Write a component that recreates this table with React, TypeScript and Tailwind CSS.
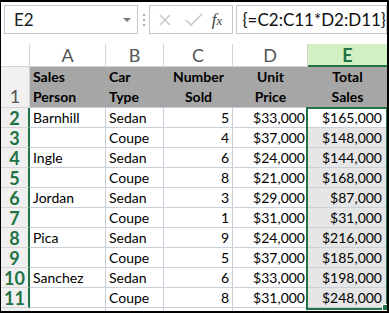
import React from 'react';

const rows = [
  ['Barnhill', 'Sedan', '5', '$33,000', '$165,000'],
  ['', 'Coupe', '4', '$37,000', '$148,000'],
  ['Ingle', 'Sedan', '6', '$24,000', '$144,000'],
  ['', 'Coupe', '8', '$21,000', '$168,000'],
  ['Jordan', 'Sedan', '3', '$29,000', '$87,000'],
  ['', 'Coupe', '1', '$31,000', '$31,000'],
  ['Pica', 'Sedan', '9', '$24,000', '$216,000'],
  ['', 'Coupe', '5', '$37,000', '$185,000'],
  ['Sanchez', 'Sedan', '6', '$33,000', '$198,000'],
  ['', 'Coupe', '8', '$31,000', '$248,000'],
];

const cols = 'grid grid-cols-[29px_76px_58px_69px_75px_79px]';

function Toolbar() {
  return (
    <div className="flex h-[42px] items-start pt-[3px] pl-[3px]">
      <div className="relative flex h-[29px] w-[137px] items-center border border-[#c6c6c6] pl-[9px] text-[17px] text-[#222]">
        E2
        <span className="absolute right-[6px] top-[12px] h-0 w-0 border-x-[4px] border-t-[4px] border-x-transparent border-t-[#7a7a7a]" />
      </div>
      <div className="ml-[5px] mt-[9px] flex flex-col gap-[3px]">
        <span className="h-[2px] w-[2px] bg-[#b0b0b0]" />
        <span className="h-[2px] w-[2px] bg-[#b0b0b0]" />
        <span className="h-[2px] w-[2px] bg-[#b0b0b0]" />
      </div>
      <div className="ml-[4px] flex h-[29px] w-[87px] items-center border border-[#c6c6c6]">
        <svg width="14" height="14" viewBox="0 0 14 14" className="ml-[8px]">
          <path d="M2 2 L12 12 M12 2 L2 12" stroke="#cacaca" strokeWidth="1.6" fill="none" />
        </svg>
        <svg width="18" height="14" viewBox="0 0 18 14" className="ml-[13px]">
          <path d="M1 7 L6 12 L17 1" stroke="#cacaca" strokeWidth="1.6" fill="none" />
        </svg>
        <span className="ml-[9px] font-['Liberation_Serif',serif] text-[17px] italic text-[#444]">
          f<span className="text-[13px]">x</span>
        </span>
      </div>
      <div className="ml-[3px] flex h-[29px] flex-1 items-center border border-[#c6c6c6] pl-[5px] text-[17px] text-[#111]">
        {'{=C2:C11*D2:D11}'}
      </div>
    </div>
  );
}

export default function App() {
  return (
    <div className="relative h-[313px] w-[389px] overflow-hidden border-t-2 border-r-2 border-b-2 border-l border-black bg-white font-['Lato',sans-serif]">
      <Toolbar />

      {/* column headers */}
      <div className={`${cols} h-[23px] text-[18px] text-[#555]`}>
        <div className="border-r border-b border-[#d4d4d4]" />
        {['A', 'B', 'C', 'D'].map((c) => (
          <div key={c} className="flex items-center justify-center border-r border-b border-[#d4d4d4] leading-none">
            {c}
          </div>
        ))}
        <div className="flex items-center justify-center border-b-2 border-[#217346] bg-[#d3f0c4] font-bold leading-none text-[#217346]">
          E
        </div>
      </div>

      {/* row 1 */}
      <div className={`${cols} h-[41px] text-[14px] leading-[20px] font-bold text-black`}>
        <div className="flex items-end justify-center border-r border-b border-[#d4d4d4] bg-[#f0f0f0] pb-[1px] text-[18px] font-normal text-[#555]">
          1
        </div>
        <div className="border-b border-[#c3cbd6] bg-[#a6a6a6] pl-[3px]">Sales<br />Person</div>
        <div className="border-b border-[#c3cbd6] bg-[#a6a6a6] pl-[3px]">Car<br />Type</div>
        <div className="border-b border-[#c3cbd6] bg-[#a6a6a6] text-center">Number<br />Sold</div>
        <div className="border-b border-[#c3cbd6] bg-[#a6a6a6] text-center">Unit<br />Price</div>
        <div className="border-b border-[#c3cbd6] bg-[#a6a6a6] text-center">Total<br />Sales</div>
      </div>

      {rows.map((r, i) => (
        <div key={i} className={`${cols} h-[20px] text-[14px] leading-[19px] text-black`}>
          <div className="flex items-center justify-center border-r-2 border-b border-r-[#217346] border-b-[#d4d4d4] bg-[#f0f0f0] text-[18px] font-bold leading-none text-[#217346]">
            {i + 2}
          </div>
          <div className="border-r border-b border-[#c8d0da] pl-[3px]">{r[0]}</div>
          <div className="border-r border-b border-[#c8d0da] pl-[3px]">{r[1]}</div>
          <div className="border-r border-b border-[#c8d0da] pr-[3px] text-right">{r[2]}</div>
          <div className="border-r border-b border-[#c8d0da] pr-[2px] text-right">{r[3]}</div>
          <div className={`border-b border-[#c8d0da] pr-[5px] text-right ${i === 0 ? 'bg-white' : 'bg-[#e6e6e6]'}`}>{r[4]}</div>
        </div>
      ))}

      <div className={`${cols} h-[10px]`}>
        <div className="border-r border-[#d4d4d4] bg-[#f0f0f0]" />
        <div className="border-r border-[#c8d0da]" />
        <div className="border-r border-[#c8d0da]" />
        <div className="border-r border-[#c8d0da]" />
        <div className="border-r border-[#c8d0da]" />
        <div />
      </div>

      {/* selection E2:E11 */}
      <div className="absolute left-[305px] top-[105px] h-[203px] w-[82px] border-2 border-[#217346]" />
      <div className="absolute left-[381px] top-[302px] h-[7px] w-[7px] border border-white bg-[#217346]" />
    </div>
  );
}
